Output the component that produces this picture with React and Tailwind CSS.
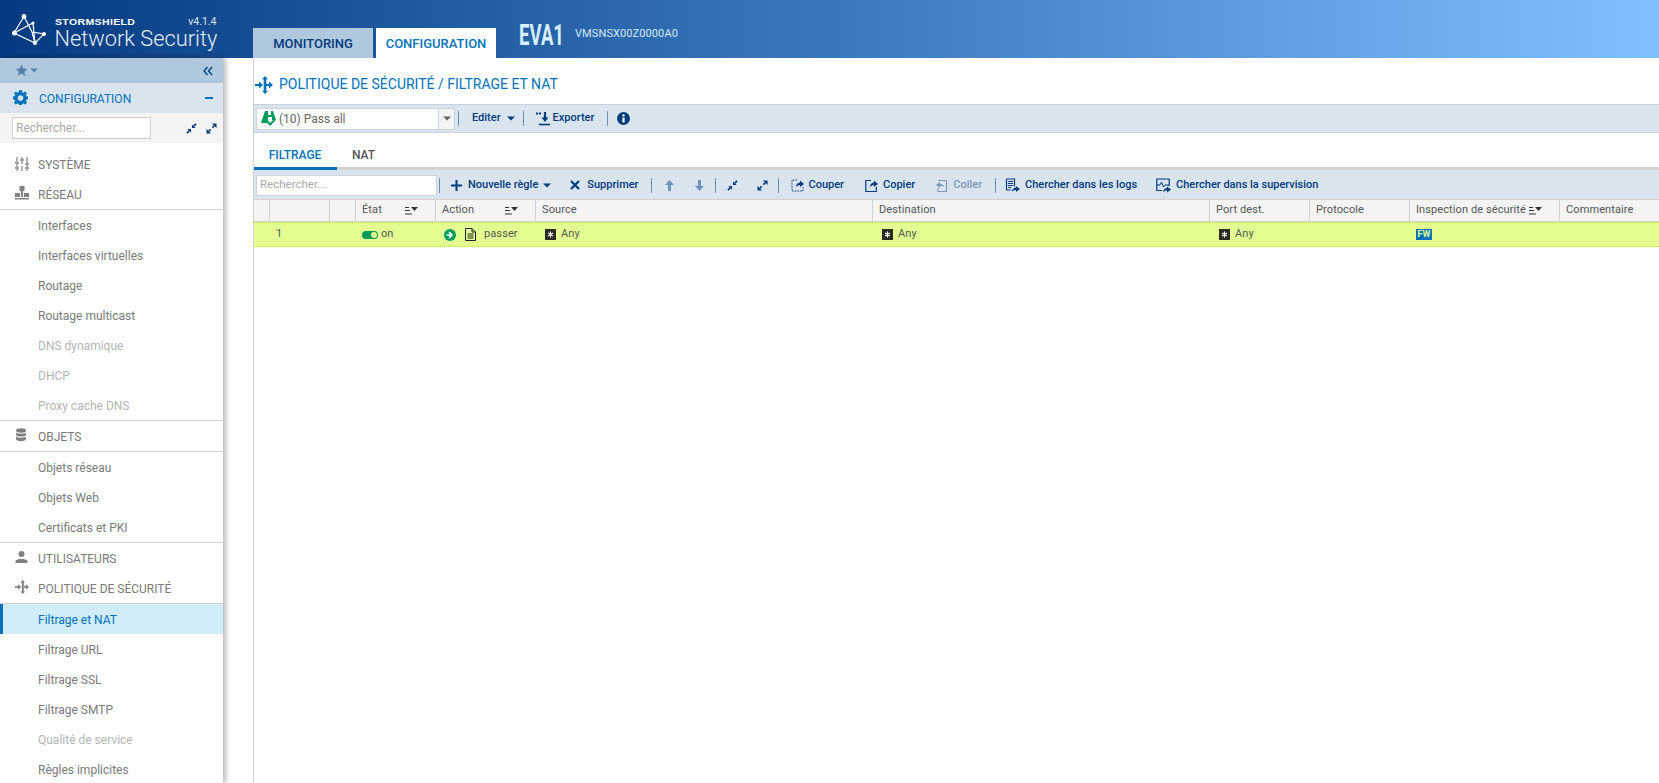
import React from "react";

const I = ({ s = 16, c = "#003b7c", children, vb = "0 0 16 16", className = "" }) => (
  <svg width={s} height={s} viewBox={vb} fill="none" stroke={c} className={`shrink-0 ${className}`}>{children}</svg>
);

const Caret = ({ c = "#003b7c" }) => (
  <svg width="8" height="5" viewBox="0 0 8 5" className="shrink-0"><path d="M0 0.5h8L4 4.5z" fill={c} /></svg>
);

const SortIcon = () => (
  <svg width="13" height="9" viewBox="0 0 13 9" className="shrink-0">
    <path d="M0 1.500h4M0 4.500h5M0 8h7" stroke="#333" strokeWidth="1" />
    <path d="M6 1h7L9.500 5z" fill="#333" />
  </svg>
);

const Collapse = ({ c = "#003b7c" }) => (
  <I s={11} vb="0 0 12 12" c={c}>
    <path d="M8.500 3.500L11 1M3.500 8.500L1 11" strokeWidth="1.800" />
    <path d="M6.500 1.500v4h4zM1.500 6.500h4v4z" fill={c} stroke="none" />
  </I>
);
const Expand = ({ c = "#003b7c" }) => (
  <I s={11} vb="0 0 12 12" c={c}>
    <path d="M7 5l2-2M5 7L3 9" strokeWidth="1.800" />
    <path d="M6.500 0.500h5v5zM0.500 6.500v5h5z" fill={c} stroke="none" />
  </I>
);

const Policy = ({ c = "#0072bc", s = 18 }) => (
  <I s={s} vb="0 0 18 18" c={c}>
    <path d="M0 9h5" strokeWidth="2.200" />
    <path d="M4 5.500L8 9l-4 3.500z" fill={c} stroke="none" />
    <path d="M10 2v14" strokeWidth="2.600" />
    <path d="M10 0L7 3.200h6zM10 18l-3-3.200h6z" fill={c} stroke="none" />
    <path d="M11 9h3" strokeWidth="2.200" />
    <path d="M14 5.500L18 9l-4 3.500z" fill={c} stroke="none" />
  </I>
);

const Logo = () => (
  <svg width="35" height="32" viewBox="0 0 35 32" className="-mt-[2px] shrink-0">
    <g stroke="#fff" strokeWidth="1.200" fill="none">
      <path d="M12 2.500L2 19L23 29L32 20L20 18M12 2.500L20 18L23 29M2 19L21 9L23 29" />
    </g>
    <g fill="#fff">
      <circle cx="12" cy="2.500" r="2.400" />
      <circle cx="2.500" cy="19" r="2.500" />
      <circle cx="21" cy="9" r="1.500" />
      <circle cx="32" cy="20" r="2" />
      <circle cx="23" cy="29" r="2" />
    </g>
  </svg>
);

const Sliders = () => (
  <I s={14} vb="0 0 14 14" c="#808080">
    <path d="M2 0v5M2 7v3M2 12v2M7 0v2M7 4v3M7 9v5M12 0v6M12 8v2M12 12v2" strokeWidth="1.200" />
    <path d="M0 6h4M5 3h4M10 7h4M0 11h4M10 11h4" strokeWidth="1.400" />
  </I>
);
const Network = () => (
  <svg width="14" height="14" viewBox="0 0 14 14" className="shrink-0" fill="#808080">
    <rect x="4.500" y="0" width="5" height="5" />
    <rect x="0" y="7" width="5" height="4" />
    <rect x="9" y="7" width="5" height="4" />
    <rect x="6" y="5" width="2" height="6" />
    <rect x="0" y="12" width="14" height="1.500" />
  </svg>
);
const Db = () => (
  <svg width="12" height="14" viewBox="0 0 12 14" className="shrink-0" fill="#808080">
    <ellipse cx="6" cy="2.500" rx="5" ry="2.200" />
    <path d="M1 4.500c1 1.600 9 1.600 10 0V7c-1 2-9 2-10 0zM1 8.500c1 1.600 9 1.600 10 0V11c-1 3-9 3-10 0z" />
  </svg>
);
const User = () => (
  <svg width="13" height="12" viewBox="0 0 13 12" className="shrink-0" fill="#808080">
    <circle cx="6.500" cy="3" r="3" />
    <path d="M0.500 12V9.800C1.500 7.400 11.500 7.400 12.500 9.800V12z" />
  </svg>
);

const MenuHead = ({ icon, label, low, className = "h-[30px]" }) => (
  <div className={`flex items-center pl-[15px] text-[12px] text-[#7a7a7a] ${className}`}>
    <span className="flex w-[23px] justify-start -mt-[3px]">{icon}</span>
    <span className={low ? "pt-[2px]" : ""}>{label}</span>
  </div>
);
const MenuItem = ({ label, off }) => (
  <div className={`flex h-[30px] items-center pl-[38px] pt-[2px] text-[12px] ${off ? "text-[#b5b5b5]" : "text-[#7a7a7a]"}`}>{label}</div>
);
const Rule = () => <div className="h-px bg-[#d0d0d0]" />;

const Sep = ({ className = "" }) => <span className={`h-[15px] w-px shrink-0 bg-[#6f8fb0] ${className}`} />;

const Tool = ({ icon, label, off, className = "" }) => (
  <span className={`flex items-center gap-[5px] whitespace-nowrap text-[11px] font-medium ${off ? "text-[#7e99b5]" : "text-[#003b7c]"} ${className}`}>
    {icon}
    {label}
  </span>
);

const Any = () => (
  <span className="flex items-center gap-[5px]">
    <svg width="11" height="11" viewBox="0 0 11 11" className="shrink-0">
      <rect width="11" height="11" fill="#2b2b20" />
      <path d="M5.500 2.500v6M3 4l5 3M8 4L3 7" stroke="#fff" strokeWidth="1.100" />
    </svg>
    <span>Any</span>
  </span>
);

const Hd = ({ children, sort, className = "" }) => (
  <div className={`flex h-full shrink-0 items-center justify-between whitespace-nowrap border-r border-[#d2d2d2] pl-[6px] ${className}`}>
    <span>{children}</span>
    {sort}
  </div>
);

const Cell = ({ className = "", children }) => (
  <div className={`flex h-full shrink-0 items-center pl-[6px] ${className}`}>{children}</div>
);

export default function App() {
  return (
    <div className="flex h-[783px] w-[1659px] flex-col overflow-hidden bg-white font-['Roboto',sans-serif]">
      <header className="flex h-[58px] shrink-0 items-end bg-gradient-to-r from-[#053a80] via-[#3a78bd] to-[#80c0ff]">
        <div className="relative flex h-full w-[253px] shrink-0 items-start pl-[12px] pt-[16px]">
          <Logo />
          <div className="ml-[7.500px] text-white">
            <div className="flex w-[162px] items-center justify-between pt-[1px]">
              <span className="origin-left scale-x-[1.17] font-['Liberation_Sans',sans-serif] text-[9px] font-bold leading-[10px] tracking-[0.3px]">STORMSHIELD</span>
              <span className="text-[10.500px] leading-[10px] text-[#d5e3f2]">v4.1.4</span>
            </div>
            <div className="-mt-[1px] whitespace-nowrap text-[21.800px] font-light leading-[26px] text-[#e3ecf6]">Network Security</div>
          </div>
        </div>
        <div className="flex h-[30px] w-[120px] items-center justify-center bg-[#b0c8de] pt-[2px] text-[13px] font-medium text-[#003b7c]">MONITORING</div>
        <div className="ml-[3px] flex h-[30px] w-[120px] items-center justify-center bg-white pt-[2px] text-[13px] font-medium text-[#0072bc]">CONFIGURATION</div>
        <div className="ml-[23px] flex h-full w-[56px] items-center pt-[13px]">
          <span className="origin-left scale-x-[.64] text-[29px] font-bold leading-none text-[#d7efff]">EVA1</span>
        </div>
        <div className="flex h-full items-center pt-[11px] text-[11px] tracking-[0.1px] text-[#d7e8f8]">VMSNSX00Z0000A0</div>
      </header>

      <div className="flex min-h-0 flex-1">
        <aside className="z-10 w-[223px] shrink-0 overflow-hidden bg-white shadow-[3px_0_5px_rgba(0,0,0,0.28)]">
          <div className="flex h-[25px] items-center justify-between bg-[#b0c8de] pl-[15px] pr-[10px]">
            <span className="flex items-center gap-[2px]">
              <svg width="13" height="13" viewBox="0 0 24 24" fill="#5b82ad"><path d="M12 1l3.400 7.200 7.600 1-5.500 5.400 1.400 7.800L12 17.700l-6.900 3.700 1.400-7.800L1 9.200l7.600-1z" /></svg>
              <Caret c="#5b82ad" />
            </span>
            <svg width="10" height="10" viewBox="0 0 10 10" fill="none" stroke="#003b7c" strokeWidth="1.300"><path d="M4.500 1L1 5l3.500 4M9 1L5.500 5 9 9" /></svg>
          </div>
          <div className="flex h-[30px] items-center justify-between bg-[#dae4ee] pl-[13px] pr-[10px] text-[12px] text-[#0072bc]">
            <span className="flex items-center gap-[11px]">
              <svg width="15" height="15" viewBox="0 0 16 16" fill="#0072bc" className="-mt-[1px]">
                <path fillRule="evenodd" d="M6.600 0h2.800l.4 2.200 1.300.6L13 1.500l2 2-1.300 1.900.6 1.300 2.200.4v2.800l-2.200.4-.6 1.300L15 13.500l-2 2-1.900-1.300-1.300.6-.4 2.200H6.600l-.4-2.200-1.300-.6L3 15.500l-2-2 1.300-1.900-.6-1.300L-.5 9.900V7.100l2.200-.4.6-1.300L1 3.500l2-2 1.900 1.300 1.300-.6zM8 5.500a3 3 0 100 6 3 3 0 000-6z" />
              </svg>
              <span className="pt-[1px]">CONFIGURATION</span>
            </span>
            <span className="h-[2px] w-[8px] bg-[#0072bc]" />
          </div>
          <div className="flex h-[30px] items-center bg-[#f4f4f4] pl-[12px]">
            <div className="flex h-[22px] w-[139px] items-center border border-[#cfcfcf] bg-white pb-[1px] pl-[3px] text-[12px] text-[#a9a9a9]">Rechercher...</div>
            <span className="ml-[35px] flex items-center gap-[9px]"><Collapse /><Expand /></span>
          </div>
          <div className="h-[7px]" />
          <MenuHead icon={<Sliders />} label="SYSTÈME" />
          <MenuHead icon={<Network />} label="RÉSEAU" className="h-[29px]" />
          <Rule />
          <MenuItem label="Interfaces" />
          <MenuItem label="Interfaces virtuelles" />
          <MenuItem label="Routage" />
          <MenuItem label="Routage multicast" />
          <MenuItem label="DNS dynamique" off />
          <MenuItem label="DHCP" off />
          <MenuItem label="Proxy cache DNS" off />
          <Rule />
          <MenuHead icon={<Db />} label="OBJETS" low />
          <Rule />
          <MenuItem label="Objets réseau" />
          <MenuItem label="Objets Web" />
          <MenuItem label="Certificats et PKI" />
          <Rule />
          <MenuHead icon={<User />} label="UTILISATEURS" low />
          <MenuHead icon={<Policy c="#808080" s={14} />} label="POLITIQUE DE SÉCURITÉ" low />
          <Rule />
          <div className="flex h-[30px] items-center border-l-[3px] border-[#0072bc] bg-[#d0edf9] pl-[35px] pt-[2px] text-[12px] text-[#0072bc]">Filtrage et NAT</div>
          <MenuItem label="Filtrage URL" />
          <MenuItem label="Filtrage SSL" />
          <MenuItem label="Filtrage SMTP" />
          <MenuItem label="Qualité de service" off />
          <MenuItem label="Règles implicites" />
        </aside>

        <main className="ml-[30px] min-w-0 flex-1 border-l border-[#d2d2d2]">
          <div className="flex h-[46px] items-center gap-[6px] pl-[1px] pt-[7px]">
            <Policy />
            <span className="text-[14px] text-[#0072bc]">POLITIQUE DE SÉCURITÉ / FILTRAGE ET NAT</span>
          </div>

          <div className="flex h-[29px] items-center border-y border-[#c8d2dc] bg-[#dae4ee] pl-[2px] text-[11px] font-medium text-[#003b7c]">
            <div className="flex h-[22px] w-[183px] items-center border border-[#cfd4d9] bg-white pl-[4px]">
              <svg width="18" height="15" viewBox="0 0 18 15" className="shrink-0">
                <path d="M4 0h3v4h3V0h2l3 9h-4V6H7v3l-1 3H0z" fill="#009a5b" />
                <path d="M6 10l3 3.500 5-5" stroke="#009a5b" strokeWidth="2" fill="none" />
              </svg>
              <span className="flex-1 text-[12px] font-normal text-[#666]">(10) Pass all</span>
            </div>
            <div className="flex h-[22px] w-[16px] items-center justify-center border-y border-r border-[#cfd4d9] bg-[#f3f3f3]"><Caret c="#666" /></div>
            <Sep className="ml-[3px]" />
            <span className="ml-[13px] flex items-center gap-[6px]">Editer <Caret /></span>
            <Sep className="ml-[8px]" />
            <span className="ml-[12px] flex items-center gap-[3px]">
              <I s={14} vb="0 0 14 14">
                <path d="M0 1.500h2M3 1.500h2" strokeWidth="2.200" />
                <path d="M9 0v6" strokeWidth="2.200" />
                <path d="M5.500 5.500h7L9 10z" fill="#003b7c" stroke="none" />
                <path d="M3 12.500h12" strokeWidth="1.600" />
              </I>
              Exporter
            </span>
            <Sep className="ml-[13px]" />
            <svg width="13" height="13" viewBox="0 0 13 13" className="ml-[9px]">
              <circle cx="6.500" cy="6.500" r="6.500" fill="#003b7c" />
              <rect x="5.400" y="5.500" width="2.200" height="5" fill="#fff" />
              <rect x="5.400" y="2.400" width="2.200" height="2" fill="#fff" />
            </svg>
          </div>

          <div className="mt-[7px] flex h-[30px] items-start border-b-[3px] border-[#d2d2d2] text-[12px] font-medium">
            <div className="-mb-[3px] flex h-[30px] w-[83px] items-center justify-center border-b-[3px] border-[#0072bc] pr-[1px] pt-[3px] text-[#0072bc]">FILTRAGE</div>
            <div className="flex h-[27px] items-center pl-[15px] pt-[3px] text-[#555]">NAT</div>
          </div>

          <div className="flex h-[29px] items-center bg-[#dae4ee] pl-[2px] pt-[1px]">
            <div className="flex h-[21px] w-[181px] shrink-0 items-center border border-[#cfd4d9] bg-white pl-[3px] text-[11.500px] text-[#a9a9a9]">Rechercher...</div>
            <Sep className="ml-[2px]" />
            <Tool className="ml-[11px] !gap-[6px]" label="Nouvelle règle" icon={<I s={11} vb="0 0 11 11"><path d="M5.500 0v11M0 5.500h11" strokeWidth="2" /></I>} />
            <span className="ml-[5px]"><Caret /></span>
            <Tool className="ml-[19px] !gap-[7px]" label="Supprimer" icon={<I s={10} vb="0 0 10 10"><path d="M1 1l8 8M9 1l-8 8" strokeWidth="2.200" /></I>} />
            <Sep className="ml-[12px]" />
            <svg width="9" height="11" viewBox="0 0 9 11" className="ml-[13px]"><path d="M4.500 0L9 5H6v6H3V5H0z" fill="#6f93b8" /></svg>
            <svg width="9" height="11" viewBox="0 0 9 11" className="ml-[21px]"><path d="M4.500 11L9 6H6V0H3v6H0z" fill="#6f93b8" /></svg>
            <Sep className="ml-[11px]" />
            <span className="ml-[11px]"><Collapse /></span>
            <span className="ml-[19px]"><Expand /></span>
            <Sep className="ml-[10px]" />
            <Tool className="ml-[12px] !gap-[5px]" label="Couper" icon={
              <I s={13} vb="0 0 13 13">
                <path d="M6 1H1v11h11V8" strokeDasharray="1.500 1.200" />
                <path d="M5 8c0-3 2-4.500 4-4.500V1.500L13 5 9 8V6C7.500 6 6 7 5 8z" fill="#003b7c" stroke="none" />
              </I>} />
            <Tool className="ml-[21px] !gap-[5px]" label="Copier" icon={
              <I s={13} vb="0 0 13 13">
                <path d="M6 1.500H.8v11h10.500V8" strokeWidth="1.200" />
                <path d="M5 8c0-3 2-4.500 4-4.500V1.500L13 5 9 8V6C7.500 6 6 7 5 8z" fill="#003b7c" stroke="none" />
              </I>} />
            <Tool className="ml-[20px] !gap-[5px]" off label="Coller" icon={
              <I s={13} vb="0 0 13 13" c="#7e99b5">
                <path d="M3 1.500h8.500v11H3V9" strokeWidth="1.100" />
                <path d="M8 7c0-2-2-3-4-3V2L0 5l4 3V6c1.500 0 3 0 4 1z" fill="#7e99b5" stroke="none" transform="translate(1 1)" />
              </I>} />
            <Sep className="ml-[13px]" />
            <Tool className="ml-[9px] !gap-[5px]" label="Chercher dans les logs" icon={
              <I s={15} vb="0 0 15 15">
                <path d="M1.500 1h8v7.500M1.500 1v11H6" strokeWidth="1.200" />
                <path d="M3 3.500h5M3 5.500h5M3 7.500h5M3 9.500h3" />
                <path d="M7 14c0-3 2-4.500 4-4.500V8l4 3-4 3v-2c-1.500 0-3 .5-4 2z" fill="#003b7c" stroke="none" />
              </I>} />
            <Tool className="ml-[19px] !gap-[5px]" label="Chercher dans la supervision" icon={
              <I s={15} vb="0 0 15 15">
                <path d="M6 12.500H.8V1h12.400v7" strokeWidth="1.200" />
                <path d="M1 7h3l1.500-3 2 5 1.500-2h4" />
                <path d="M7 14.500c0-3 2-4.500 4-4.500V8.500l4 3-4 3v-2c-1.500 0-3 .5-4 2z" fill="#003b7c" stroke="none" />
              </I>} />
          </div>

          <div className="flex h-[23px] items-center border-y border-[#d2d2d2] bg-[#f4f4f4] text-[11px] tracking-[0.1px] text-[#555]">
            <Hd className="w-[16px]" />
            <Hd className="w-[60px]" />
            <Hd className="w-[26px]" />
            <Hd className="w-[80px] pr-[17px]" sort={<SortIcon />}>État</Hd>
            <Hd className="w-[100px] pr-[17px]" sort={<SortIcon />}>Action</Hd>
            <Hd className="w-[337px]">Source</Hd>
            <Hd className="w-[337px]">Destination</Hd>
            <Hd className="w-[100px]">Port dest.</Hd>
            <Hd className="w-[100px]">Protocole</Hd>
            <Hd className="w-[150px] pr-[17px]" sort={<SortIcon />}>Inspection de sécurité</Hd>
            <div className="pl-[6px]">Commentaire</div>
          </div>

          <div className="flex h-[25px] items-center border-y border-dotted border-[#c6e000] bg-[#e3ff91] text-[11px] tracking-[0.1px] text-[#555]">
            <div className="w-[76px] shrink-0 pl-[22px]">1</div>
            <div className="w-[26px] shrink-0" />
            <Cell className="w-[80px] gap-[3px]">
              <span className="flex h-[8px] w-[16px] items-center justify-end rounded-full bg-[#009a5b] pr-[1px]"><span className="h-[6px] w-[6px] rounded-full bg-[#e3ff91]" /></span>
              <span>on</span>
            </Cell>
            <Cell className="w-[100px] !pl-[8px]">
              <svg width="12" height="12" viewBox="0 0 12 12" className="shrink-0">
                <circle cx="6" cy="6" r="6" fill="#009a5b" />
                <path d="M2.500 6h4M5 3l3 3-3 3" stroke="#fff" strokeWidth="1.700" fill="none" />
              </svg>
              <svg width="11" height="13" viewBox="0 0 11 13" fill="none" stroke="#222" className="ml-[9px] shrink-0">
                <path d="M.5.500h6.500l3.500 3.500v8.500h-10zM7 .5V4h3.500M2.500 6h6M2.500 8h6M2.500 10h6" />
              </svg>
              <span className="ml-[8px]">passer</span>
            </Cell>
            <Cell className="w-[337px] !pl-[9px]"><Any /></Cell>
            <Cell className="w-[337px] !pl-[9px]"><Any /></Cell>
            <Cell className="w-[100px] !pl-[9px]"><Any /></Cell>
            <Cell className="w-[100px]" />
            <Cell className="w-[150px]">
              <span className="flex h-[11px] w-[16px] items-center justify-center bg-[#0072bc] text-[9px] font-bold leading-none text-[#e3ff91]">FW</span>
            </Cell>
          </div>
        </main>
      </div>
    </div>
  );
}
